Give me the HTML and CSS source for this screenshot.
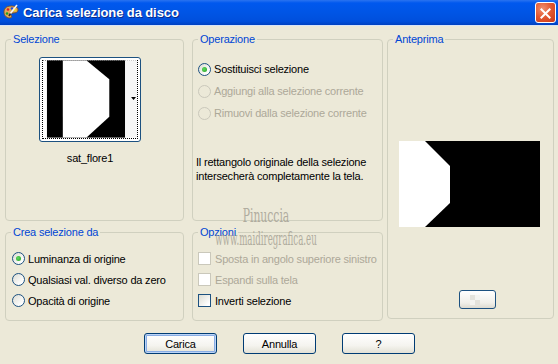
FILE: index.html
```html
<!DOCTYPE html>
<html lang="it">
  <head>
    <meta charset="UTF-8" />
    <title>Carica selezione da disco</title>
    <link rel="stylesheet" href="styles.css">
  </head>
  <body>
    <div class="window">
      <div class="titlebar">
        <svg class="app-icon" width="16" height="16" viewBox="0 0 16 16">
          <path d="M8 2 C3 2 1 5 1 8 C1 12 4 14 7 14 C9 14 9 12 8 11 C7 10 8 9 10 9 C13 9 15 8 15 6 C15 3 12 2 8 2 Z" fill="#e0a85a" stroke="#7a4a1a" stroke-width="0.8"/>
          <circle cx="5" cy="5.5" r="1.3" fill="#e02020"/>
          <circle cx="9" cy="4.5" r="1.3" fill="#2050e0"/>
          <circle cx="4" cy="9.5" r="1.3" fill="#20a020"/>
          <circle cx="12" cy="6" r="1.2" fill="#f0e020"/>
          <path d="M14 1 L7 10" stroke="#f4f4f4" stroke-width="1.6"/>
          <path d="M7.5 9.5 L6 12" stroke="#303030" stroke-width="1.8"/>
        </svg>
        <span class="title">Carica selezione da disco</span>
        <span class="close">
          <svg width="21" height="21" viewBox="0 0 21 21">
            <path d="M6 6 L15 15 M15 6 L6 15" stroke="#fff" stroke-width="2.2" stroke-linecap="square"/>
          </svg>
        </span>
      </div>

      <div class="body">
        <div class="groups">
          <div class="left-grid">
            <fieldset class="group sel">
              <legend>Selezione</legend>
              <div class="thumb">
                <div class="thumb-focus">
                  <svg width="95" height="78" viewBox="0 0 95 78">
                    <rect x="0" y="0" width="95" height="78" fill="#fff"/>
                    <rect x="4" y="0" width="79" height="78" fill="#000"/>
                    <polygon points="20,0 44,0 67,19 67,57 44,78 20,78" fill="#fff"/>
                    <rect x="83" y="0" width="12" height="78" fill="#f6f6f6"/>
                    <polygon points="89,37 94,37 91.5,40" fill="#000"/>
                  </svg>
                </div>
              </div>
              <div class="thumb-name">sat_flore1</div>
            </fieldset>

            <fieldset class="group op">
              <legend>Operazione</legend>
              <div class="opt-list">
                <label class="opt"><span class="radio checked"></span>Sostituisci selezione</label>
                <label class="opt off"><span class="radio"></span>Aggiungi alla selezione corrente</label>
                <label class="opt off"><span class="radio"></span>Rimuovi dalla selezione corrente</label>
              </div>
              <p class="note">Il rettangolo originale della selezione intersecherà completamente la tela.</p>
            </fieldset>

            <fieldset class="group crea">
              <legend>Crea selezione da</legend>
              <div class="opt-list tight">
                <label class="opt"><span class="radio checked"></span>Luminanza di origine</label>
                <label class="opt"><span class="radio"></span>Qualsiasi val. diverso da zero</label>
                <label class="opt"><span class="radio"></span>Opacità di origine</label>
              </div>
            </fieldset>

            <fieldset class="group opz">
              <legend>Opzioni</legend>
              <div class="opt-list tight">
                <label class="opt off"><span class="check"></span>Sposta in angolo superiore sinistro</label>
                <label class="opt off"><span class="check"></span>Espandi sulla tela</label>
                <label class="opt"><span class="check"></span>Inverti selezione</label>
              </div>
            </fieldset>
          </div>

          <fieldset class="group prev">
            <legend>Anteprima</legend>
            <svg class="preview" width="141" height="86" viewBox="0 0 141 86">
              <rect width="141" height="86" fill="#000"/>
              <polygon points="0,0 26,0 51,25 51,62 26,86 0,86" fill="#fff"/>
            </svg>
            <span class="zoom-btn"></span>
          </fieldset>
        </div>

        <div class="actions">
          <button class="btn default">Carica</button>
          <button class="btn">Annulla</button>
          <button class="btn">?</button>
        </div>
      </div>

      <div class="watermark">
        <div class="wm-name">Pinuccia</div>
        <div class="wm-site">www.maidiregrafica.eu</div>
      </div>
    </div>
  </body>
</html>
```

FILE: styles.css
```css
*{
    box-sizing: border-box;
}
body{
    margin: 0;
    background: #ece9d8;
    font-family: "Liberation Sans", Arial, sans-serif;
    font-size: 11px;
    letter-spacing: -0.2px;
    color: #000;
}
.window{
    position: relative;
    width: 558px;
    height: 364px;
    background: #ece9d8;
    overflow: hidden;
}

/* barra del titolo */
.titlebar{
    height: 26px;
    display: flex;
    align-items: center;
    padding: 0 2px 1px 2px;
    background: linear-gradient(#2a73f0, #0058ee 12%, #0055e5 50%, #004fdc 85%, #0041c0);
    border-bottom: 1px solid #d8e4f8;
}
.app-icon{
    margin: 0 4px 0 1px;
}
.title{
    flex: 1;
    color: #fff;
    font-weight: bold;
    font-size: 13px;
    letter-spacing: -0.1px;
    text-shadow: 1px 1px 0 #0a2a8a;
}
.close{
    width: 21px;
    height: 21px;
    border: 1px solid #fff;
    border-radius: 3px;
    background: radial-gradient(circle at 35% 30%, #f09070, #e2552e 50%, #c8381a);
    display: flex;
}

.body{
    padding: 7px 4px 0 5px;
}
.groups{
    display: flex;
    gap: 4px;
}
.left-grid{
    display: grid;
    grid-template-columns: 179px 191px;
    grid-template-rows: 188px 95px;
    column-gap: 8px;
    row-gap: 5px;
}

.group{
    margin: 0;
    padding: 0;
    min-width: 0;
    border: 1px solid #d0d0bf;
    border-radius: 4px;
}
.group legend{
    margin-left: 5px;
    padding: 0 2px;
    color: #0046d5;
    line-height: 13px;
}

/* selezione */
.thumb{
    margin: 11px 0 0 33px;
    width: 102px;
    height: 85px;
    border: 1px solid #1c5180;
    border-radius: 3px;
    background: #fff;
    padding: 2px;
}
.thumb-focus{
    width: 96px;
    height: 79px;
    border: 1px dotted #000;
    display: flex;
    align-items: flex-end;
}
.thumb-name{
    margin: 10px 0 0 33px;
    width: 102px;
    text-align: center;
}

/* opzioni */
.opt-list{
    padding: 12px 0 0 5px;
}
.opt{
    display: flex;
    align-items: center;
    height: 22px;
    gap: 3px;
}
.opt-list.tight{
    padding-top: 9px;
}
.opt-list.tight .opt{
    height: 21px;
}
.crea .opt-list{
    padding-left: 6px;
}
.opz .opt{
    gap: 4px;
}
.opt.off{
    color: #aca899;
}
.radio{
    width: 13px;
    height: 13px;
    border-radius: 50%;
    border: 1px solid #1c5180;
    background: linear-gradient(135deg, #dcdcd3, #fff 80%);
    position: relative;
}
.radio.checked::after{
    content: "";
    position: absolute;
    left: 3px;
    top: 3px;
    width: 5px;
    height: 5px;
    border-radius: 50%;
    background: radial-gradient(circle at 40% 40%, #5fd85f, #21a121);
}
.off .radio{
    border-color: #cac8bb;
    background: #ece9d8;
}
.check{
    width: 13px;
    height: 13px;
    border: 1px solid #1c5180;
    background: linear-gradient(135deg, #dcdcd3, #fff 85%);
}
.off .check{
    border-color: #cac8bb;
    background: #fff;
}
.note{
    margin: 31px 0 0 3px;
    line-height: 14px;
    width: 180px;
}

/* anteprima */
.prev{
    width: 167px;
    height: 286px;
    display: flex;
    flex-direction: column;
}
.preview{
    display: block;
    margin: 95px 0 0 11px;
}
.zoom-btn{
    display: block;
    margin: 63px 0 0 71px;
    width: 37px;
    height: 19px;
    border: 1px solid #1c5180;
    border-radius: 3px;
    background:
        repeating-conic-gradient(#f4f4f0 0 25%, #e4e3dc 0 50%) 10px 4px / 10px 10px no-repeat,
        linear-gradient(#fff, #f0efe9 70%, #dcdad0);
}

/* pulsanti */
.actions{
    display: flex;
    justify-content: center;
    gap: 26px;
    margin-top: 12px;
}
.btn{
    width: 73px;
    height: 21px;
    padding: 0;
    font-family: inherit;
    font-size: 11px;
    letter-spacing: -0.2px;
    color: #000;
    border: 1px solid #003c74;
    border-radius: 3px;
    background: linear-gradient(#fff, #f5f4ef 60%, #e3e1d6);
}
.btn.default{
    box-shadow: inset 0 0 0 1px #bcd4f6, inset 0 0 0 2px #89ade4;
}

/* filigrana */
.watermark{
    position: absolute;
    left: 146px;
    top: 206px;
    width: 240px;
    text-align: center;
    color: #9c988c;
    opacity: 0.75;
    font-family: "DejaVu Serif", serif;
    letter-spacing: 0;
    pointer-events: none;
}
.wm-name{
    font-size: 18px;
    transform: scaleX(0.6);
    line-height: 20px;
}
.wm-site{
    font-size: 18px;
    transform: scaleX(0.48);
    line-height: 20px;
    margin-top: 3px;
}
```
